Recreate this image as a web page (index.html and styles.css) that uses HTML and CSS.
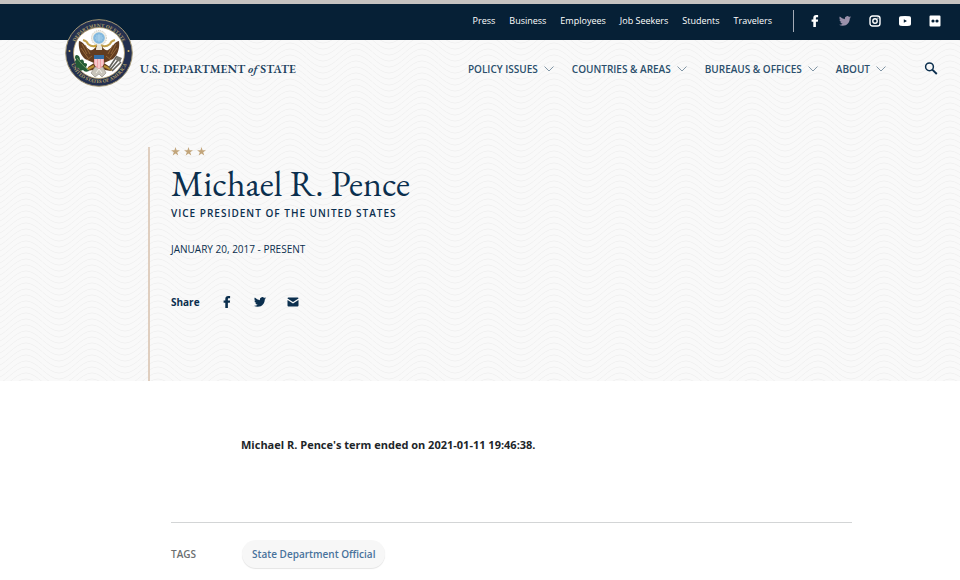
FILE: index.html
```
<!DOCTYPE html>
<html lang="en">

<head>
  <meta charset="UTF-8">
  <meta name="viewport" content="width=device-width, initial-scale=1.0">
  <title>Michael R. Pence - United States Department of State</title>
  <link rel="stylesheet" href="styles.css">
</head>

<body>
  <!-- Shared icons -->
  <svg class="sprite" aria-hidden="true">
    <symbol id="icon-facebook" viewBox="0 0 12 12">
      <path d="M4.3 12V6.8H2.6V4.5h1.7V3C4.3 1.1 5.300 0 7.200 0h1.900v2.200H7.900c-.8 0-1 .3-1 1v1.300h2.200l-.3 2.300H6.900V12z" />
    </symbol>
    <symbol id="icon-twitter" viewBox="0 0 24 24">
      <path d="M24 4.600a10 10 0 0 1-2.800.8 5 5 0 0 0 2.200-2.700c-1 .5-2 1-3.100 1.200a4.900 4.900 0 0 0-8.400 4.500A14 14 0 0 1 1.700 3.200a4.900 4.900 0 0 0 1.500 6.500 5 5 0 0 1-2.200-.6 4.900 4.900 0 0 0 3.900 4.900 5 5 0 0 1-2.200.1 4.900 4.900 0 0 0 4.600 3.400A9.900 9.900 0 0 1 0 19.500 14 14 0 0 0 7.500 21.700c9.100 0 14.300-7.700 14-14.600A10 10 0 0 0 24 4.600z" />
    </symbol>
    <symbol id="icon-chevron" viewBox="0 0 10 6">
      <path d="M.5.5 5 5 9.500.5" fill="none" stroke="currentColor" />
    </symbol>
    <symbol id="icon-star" viewBox="0 0 10 10">
      <path d="M5 0l1.200 3.600H10L6.900 5.900 8.100 9.500 5 7.300 1.900 9.500l1.200-3.600L0 3.600h3.800z" />
    </symbol>
  </svg>

  <div class="topbar">
    <nav class="topbar-links" aria-label="Audiences">
      <a href="#">Press</a>
      <a href="#">Business</a>
      <a href="#">Employees</a>
      <a href="#">Job Seekers</a>
      <a href="#">Students</a>
      <a href="#">Travelers</a>
    </nav>
    <div class="social">
      <a href="#" aria-label="Facebook"><svg class="icon"><use href="#icon-facebook" /></svg></a>
      <a href="#" class="muted" aria-label="Twitter"><svg class="icon"><use href="#icon-twitter" /></svg></a>
      <a href="#" aria-label="Instagram">
        <svg class="icon" viewBox="0 0 12 12">
          <rect x="1" y="1" width="10" height="10" rx="2.600" fill="none" stroke="currentColor" stroke-width="1.400" />
          <circle cx="6" cy="6" r="2.200" fill="none" stroke="currentColor" stroke-width="1.400" />
          <circle cx="8.900" cy="3.100" r=".7" />
        </svg>
      </a>
      <a href="#" aria-label="YouTube">
        <svg class="icon" viewBox="0 0 12 12">
          <path fill-rule="evenodd" d="M1.500 1.300Q6 .9 10.500 1.300 12 1.500 12 3v6q0 1.500-1.500 1.700-4.500.4-9 0Q0 10.500 0 9V3Q0 1.500 1.500 1.300zM4.800 4.200v3.600L8 6z" />
        </svg>
      </a>
      <a href="#" aria-label="Flickr">
        <svg class="icon" viewBox="0 0 12 12">
          <path fill-rule="evenodd" d="M1.500.5h9q1 0 1 1v9q0 1-1 1h-9q-1 0-1-1v-9q0-1 1-1zM4 4.400a1.600 1.600 0 1 0 0 3.200 1.600 1.600 0 1 0 0-3.200zM8 4.400a1.600 1.600 0 1 0 0 3.200 1.600 1.600 0 1 0 0-3.200z" />
        </svg>
      </a>
    </div>
  </div>

  <div class="banner">
    <header class="header">
      <a href="#" class="logo">
        <svg class="seal" viewBox="0 0 68 68" aria-hidden="true">
          <defs>
            <path id="seal-top" d="M8 34a26 26 0 0 1 52 0" />
            <path id="seal-bottom" d="M4 34a30 30 0 0 0 60 0" />
          </defs>
          <circle cx="34" cy="34" r="33.300" fill="#24304f" stroke="#a79a76" />
          <circle cx="34" cy="34" r="25.500" fill="#fff" stroke="#b7a06a" stroke-width=".8" />
          <text class="seal-text"><textPath href="#seal-top" startOffset="50%">DEPARTMENT OF STATE</textPath></text>
          <text class="seal-text"><textPath href="#seal-bottom" startOffset="50%">UNITED STATES OF AMERICA</textPath></text>
          <circle cx="4.500" cy="32" r="1" fill="#d9bb62" />
          <circle cx="63.500" cy="32" r="1" fill="#d9bb62" />
          <!-- glory -->
          <circle cx="34" cy="19" r="7.500" fill="#f1eee4" stroke="#c8c5bb" stroke-dasharray="1 1" />
          <circle cx="34" cy="19" r="5.800" fill="#83b9df" />
          <path d="M31 17h6M30 19h8M31 21h6M34 15v8" stroke="#b5d7ed" stroke-width=".8" />
          <!-- scroll -->
          <path d="M18 21q4 1 5 4 5 4 9 1M50 21q-4 1-5 4-5 4-9 1" fill="none" stroke="#c2a04b" stroke-width="2" />
          <!-- wings -->
          <path d="M14 22c5 1 7 7 11 9 3 1 5-2 6-4h6c1 2 3 5 6 4 4-2 6-8 11-9 1 6-1 14-6 18l-9 4 6 4 1 4-6-1-6-5-6 5-6 1 1-4 6-4-9-4c-5-4-7-12-6-18z" fill="#623d20" />
          <path d="M17 25l5 10M16 29l7 10M20 26l5 9M51 25l-5 10M52 29l-7 10M48 26l-5 9M22 41l5-4M46 41l-5-4" stroke="#a27440" stroke-width=".8" />
          <path d="M29 47l-8 4M39 47l8 4" stroke="#bb9136" stroke-width="2" />
          <!-- head and tail -->
          <path d="M31 31q0-5 3-5 4 0 3 5z" fill="#ece6d9" />
          <path d="M31 26l-3 1 3 2z" fill="#d0a52e" />
          <path d="M30 48h8l3 6-4 4-3-3-4 3-4-4z" fill="#c9c4bb" stroke="#8d867e" stroke-width=".6" />
          <path d="M31 54l3-4 3 4" stroke="#f5f2eb" fill="none" />
          <!-- shield -->
          <path d="M29 36h10v9q-1 3-5 5-4-2-5-5z" fill="#eea2a7" />
          <path d="M31 40v7M34 40v9M37 40v7" stroke="#fff" stroke-width=".8" />
          <path d="M29 36h10v4H29z" fill="#346ea5" />
          <!-- olive branch and arrows -->
          <path d="M11 36q4 0 4 5 4-2 4 3 5 0 2 4l3 4q-4 2-6-1-4 2-4-2-4 0-3-4-2-3 0-4-2-3 0-5z" fill="#245b36" />
          <path d="M12 39q4 6 11 12" stroke="#6c9a61" fill="none" />
          <path d="M45 51l9-11M47 52l9-9M44 49l8-12" stroke="#62625d" stroke-width="1.600" />
          <path d="M52 37l5 2-2 4-4-2z" fill="#77766d" />
        </svg>
        <span>U.S. DEPARTMENT <em>of</em> STATE</span>
      </a>
      <nav class="main-nav" aria-label="Main">
        <button type="button">POLICY ISSUES <svg class="chevron"><use href="#icon-chevron" /></svg></button>
        <button type="button">COUNTRIES &amp; AREAS <svg class="chevron"><use href="#icon-chevron" /></svg></button>
        <button type="button">BUREAUS &amp; OFFICES <svg class="chevron"><use href="#icon-chevron" /></svg></button>
        <button type="button">ABOUT <svg class="chevron"><use href="#icon-chevron" /></svg></button>
      </nav>
      <button type="button" class="search" aria-label="Search">
        <svg viewBox="0 0 14 14">
          <circle cx="5.500" cy="4.800" r="3.900" fill="none" stroke="currentColor" stroke-width="1.500" />
          <path d="M8.300 7.600 12.800 12" stroke="currentColor" stroke-width="1.900" />
        </svg>
      </button>
    </header>

    <section class="hero">
      <div class="stars">
        <svg><use href="#icon-star" /></svg>
        <svg><use href="#icon-star" /></svg>
        <svg><use href="#icon-star" /></svg>
      </div>
      <h1>Michael R. Pence</h1>
      <p class="role">VICE PRESIDENT OF THE UNITED STATES</p>
      <p class="dates">JANUARY 20, 2017 - PRESENT</p>
      <div class="share">
        <span>Share</span>
        <a href="#" aria-label="Share on Facebook"><svg class="icon"><use href="#icon-facebook" /></svg></a>
        <a href="#" aria-label="Share on Twitter"><svg class="icon"><use href="#icon-twitter" /></svg></a>
        <a href="#" aria-label="Share by email">
          <svg class="icon" viewBox="0 0 12 12">
            <path d="M1.500 1.500h9q1 0 1 1L6 6 .5 2.500q0-1 1-1zM.5 4 6 7.500 11.500 4v5.500q0 1-1 1h-9q-1 0-1-1z" />
          </svg>
        </a>
      </div>
    </section>
  </div>

  <main class="content">
    <p class="notice">Michael R. Pence's term ended on 2021-01-11 19:46:38.</p>
    <div class="tags">
      <h2>TAGS</h2>
      <a href="#" class="tag">State Department Official</a>
    </div>
  </main>
</body>

</html>
```
FILE: styles.css
```
* {
  box-sizing: border-box;
}

body {
  font-family: "Open Sans", sans-serif;
  margin: 0;
  background: #fff;
  color: #0b2f4e;
  font-size: 10px;
  line-height: 16px;
}

a {
  color: inherit;
  text-decoration: none;
}

button {
  padding: 0;
  border: none;
  background: none;
  color: inherit;
  font: inherit;
  cursor: pointer;
}

p,
h1,
h2 {
  margin: 0;
}

svg {
  display: block;
  fill: currentColor;
}

.sprite {
  display: none;
}

.icon {
  width: 12px;
  height: 12px;
}

/* Top bar */
.topbar {
  display: flex;
  justify-content: flex-end;
  align-items: center;
  height: 40px;
  padding: 0 19px 2px 0;
  border-top: 4px solid #c5c2c0;
  background: #062036;
  color: #fff;
  font-size: 9px;
  font-weight: 500;
}

.topbar-links {
  display: flex;
  gap: 14px;
  padding-right: 21px;
}

.social {
  display: flex;
  align-items: center;
  gap: 18px;
  height: 22px;
  padding-left: 15px;
  border-left: 1px solid #a3abb6;
}

.muted {
  color: #9a91ab;
}

/* Header and hero share the wave background */
.banner {
  background: #f9f9f9 url("data:image/svg+xml,%3Csvg xmlns='http://www.w3.org/2000/svg' width='66' height='6'%3E%3Cg fill='none' stroke='%23f1f1f1'%3E%3Cpath id='a' d='M-7 9C5 9 14-9 26-9S47 9 59 9 80-9 92-9'/%3E%3Cuse href='%23a' y='-12'/%3E%3Cuse href='%23a' y='-6'/%3E%3Cuse href='%23a' y='6'/%3E%3Cuse href='%23a' y='12'/%3E%3C/g%3E%3C/svg%3E");
}

.header {
  display: flex;
  align-items: center;
  height: 58px;
  padding: 0 22px 0 65px;
}

.logo {
  position: relative;
  margin-right: auto;
  padding-left: 75px;
  color: #1d4260;
  font-family: "EB Garamond", "Liberation Serif", serif;
  font-size: 12px;
  font-weight: 600;
  white-space: nowrap;
}

/* The seal hangs over the top bar */
.seal {
  position: absolute;
  left: 0;
  bottom: -10px;
  width: 68px;
  height: 68px;
}

.seal-text {
  fill: #b5a36d;
  font-size: 5px;
  font-weight: bold;
  text-anchor: middle;
}

.main-nav {
  display: flex;
  gap: 18px;
  padding-right: 38px;
  color: #2b4f6c;
  font-weight: 600;
}

.main-nav button {
  display: flex;
  align-items: center;
  gap: 6px;
  white-space: nowrap;
}

.chevron {
  width: 10px;
  height: 6px;
  color: #8297a7;
}

.search svg {
  width: 14px;
  height: 14px;
}

/* Hero */
.hero {
  min-height: 234px;
  margin: 49px 0 0 148px;
  padding-left: 21px;
  border-left: 2px solid #dfcebf;
}

.stars {
  display: flex;
  gap: 4px;
  color: #c2a57b;
}

.stars svg {
  width: 9px;
  height: 9px;
}

h1 {
  margin-top: 7px;
  font-family: "EB Garamond", "Liberation Serif", serif;
  font-size: 36px;
  font-weight: normal;
  line-height: 42px;
}

.role {
  font-weight: 600;
  letter-spacing: 1px;
}

.dates {
  margin-top: 20px;
}

.share {
  display: flex;
  align-items: center;
  gap: 21px;
  margin-top: 37px;
  font-weight: bold;
}

/* Content */
.content {
  padding: 56px 108px 12px 171px;
}

.notice {
  padding: 0 0 69px 70px;
  color: #212529;
  font-size: 11px;
  font-weight: bold;
}

.tags {
  display: flex;
  align-items: center;
  gap: 46px;
  padding-top: 17px;
  border-top: 1px solid #d3d5d6;
}

h2 {
  color: #6c6f70;
  font-size: 10px;
  font-weight: 600;
}

.tag {
  padding: 6px 10px;
  border-radius: 14px;
  background: #f7f7f7;
  box-shadow: 0 1px 1px #e4e4e4;
  color: #48729b;
  font-weight: 600;
}
```
